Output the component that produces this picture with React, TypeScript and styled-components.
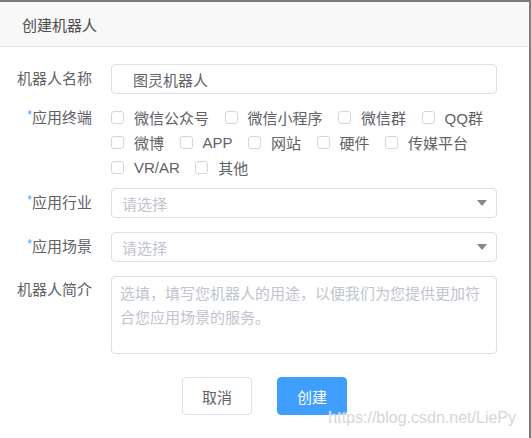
import React from "react";
import styled, { createGlobalStyle } from "styled-components";

const GlobalStyle = createGlobalStyle`
  html, body { margin: 0; padding: 0; background: #ffffff; }
  body { font-family: "Liberation Sans", "Noto Sans CJK SC", sans-serif; }
  * { box-sizing: border-box; }
`;

const Dialog = styled.div`
  position: relative;
  width: 531px;
  height: 438px;
  border-top: 2px solid #7d7d7d;
  border-right: 2px solid #7d7d7d;
  background: #ffffff;
  overflow: hidden;
`;

const Header = styled.div`
  height: 45px;
  display: flex;
  align-items: center;
  padding-left: 22px;
  background: #f8f8f8;
  border-bottom: 1px solid #e6e6e6;
  font-size: 15px;
  color: #4d4d4d;
`;

const Body = styled.div`
  padding-top: 17px;
  display: flex;
  flex-direction: column;
`;

const FormItem = styled.div<{ $mb: number }>`
  display: grid;
  grid-template-columns: 92px 386px;
  column-gap: 19px;
  align-items: start;
  margin-bottom: ${(p) => p.$mb}px;
`;

const Label = styled.div<{ $lh: number }>`
  text-align: right;
  font-size: 15px;
  color: #606266;
  line-height: ${(p) => p.$lh}px;
  height: ${(p) => p.$lh}px;
  white-space: nowrap;
`;

const Star = styled.span`
  color: #409eff;
  font-size: 12px;
  line-height: 1;
  vertical-align: 4px;
`;

const TextInput = styled.input`
  width: 100%;
  height: 30px;
  border: 1px solid #dcdfe6;
  border-radius: 4px;
  padding: 0 0 0 21px;
  font-family: inherit;
  font-size: 15px;
  color: #606266;
  outline: none;
  background: #fff;
`;

const CheckGroup = styled.div`
  display: flex;
  flex-wrap: wrap;
  column-gap: 15.5px;
`;

const CheckItem = styled.label`
  display: inline-flex;
  align-items: center;
  height: 25px;
  font-size: 15px;
  color: #606266;
  white-space: nowrap;
`;

const Box = styled.span`
  width: 13px;
  height: 13px;
  border: 1px solid #d3d6dd;
  border-radius: 3px;
  margin-right: 10px;
  background: #fff;
`;

const SelectBox = styled.div`
  height: 30px;
  border: 1px solid #dcdfe6;
  border-radius: 4px;
  display: flex;
  align-items: center;
  justify-content: space-between;
  padding: 0 9px 0 10px;
  font-size: 15px;
  color: #c0c4cc;
`;

const TextArea = styled.textarea`
  display: block;
  width: 100%;
  height: 78px;
  border: 1px solid #dcdfe6;
  border-radius: 4px;
  padding: 5px 8px;
  font-family: inherit;
  font-size: 15px;
  line-height: 24px;
  color: #606266;
  resize: none;
  outline: none;
  &::placeholder { color: #c0c4cc; }
`;

const Footer = styled.div`
  margin-top: 23px;
  display: flex;
  justify-content: center;
  gap: 25px;
`;

const Button = styled.button<{ $primary?: boolean }>`
  width: 70px;
  height: 38px;
  border-radius: 4px;
  font-family: inherit;
  font-size: 15px;
  border: 1px solid ${(p) => (p.$primary ? "#409eff" : "#dcdfe6")};
  background: ${(p) => (p.$primary ? "#409eff" : "#ffffff")};
  color: ${(p) => (p.$primary ? "#ffffff" : "#606266")};
  padding: 0;
`;

const Watermark = styled.div`
  position: absolute;
  right: 13px;
  bottom: 10px;
  font-family: "Liberation Sans", sans-serif;
  font-size: 16px;
  line-height: 20px;
  color: #d6d6d6;
  text-shadow: 0 0 1px #ffffff;
  pointer-events: none;
`;

const Arrow = () => (
  <svg width="10" height="6" viewBox="0 0 10 6">
    <polygon points="0,0 10,0 5,6" fill="#85878d" />
  </svg>
);

const terminals = [
  "微信公众号", "微信小程序", "微信群", "QQ群",
  "微博", "APP", "网站", "硬件", "传媒平台",
  "VR/AR", "其他",
];

export default function App() {
  return (
    <>
      <GlobalStyle />
      <Dialog>
        <Header>创建机器人</Header>
        <Body>
          <FormItem $mb={11}>
            <Label $lh={30}>机器人名称</Label>
            <TextInput defaultValue="图灵机器人" />
          </FormItem>
          <FormItem $mb={8}>
            <Label $lh={25}><Star>*</Star>应用终端</Label>
            <CheckGroup>
              {terminals.map((t) => (
                <CheckItem key={t}>
                  <Box />
                  {t}
                </CheckItem>
              ))}
            </CheckGroup>
          </FormItem>
          <FormItem $mb={14}>
            <Label $lh={30}><Star>*</Star>应用行业</Label>
            <SelectBox>
              <span>请选择</span>
              <Arrow />
            </SelectBox>
          </FormItem>
          <FormItem $mb={14}>
            <Label $lh={30}><Star>*</Star>应用场景</Label>
            <SelectBox>
              <span>请选择</span>
              <Arrow />
            </SelectBox>
          </FormItem>
          <FormItem $mb={0}>
            <Label $lh={28}>机器人简介</Label>
            <TextArea placeholder="选填，填写您机器人的用途，以便我们为您提供更加符合您应用场景的服务。" />
          </FormItem>
          <Footer>
            <Button>取消</Button>
            <Button $primary>创建</Button>
          </Footer>
        </Body>
        <Watermark>https://blog.csdn.net/LiePy</Watermark>
      </Dialog>
    </>
  );
}
